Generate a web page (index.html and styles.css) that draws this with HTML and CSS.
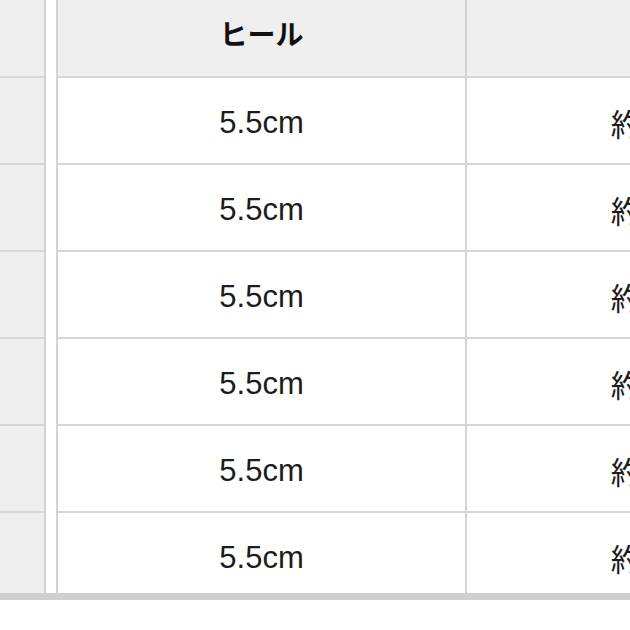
FILE: index.html
```html
<!DOCTYPE html>
<html lang="ja">
<head>
<meta charset="utf-8">
<title>サイズ表</title>
<link rel="stylesheet" href="styles.css">
</head>
<body>
<div class="sheet">
  <div class="frame">
    <div class="pane pane-fixed">
      <div class="fcell head"></div>
      <div class="fcell"></div>
      <div class="fcell"></div>
      <div class="fcell"></div>
      <div class="fcell"></div>
      <div class="fcell"></div>
      <div class="fcell"></div>
    </div>
    <div class="pane pane-scroll">
      <div class="row head">
        <div class="cell">ヒール</div>
        <div class="cell"></div>
      </div>
      <div class="row"><div class="cell">5.5cm</div><div class="cell">約1.5cm</div></div>
      <div class="row"><div class="cell">5.5cm</div><div class="cell">約1.5cm</div></div>
      <div class="row"><div class="cell">5.5cm</div><div class="cell">約1.5cm</div></div>
      <div class="row"><div class="cell">5.5cm</div><div class="cell">約1.5cm</div></div>
      <div class="row"><div class="cell">5.5cm</div><div class="cell">約1.5cm</div></div>
      <div class="row"><div class="cell">5.5cm</div><div class="cell">約1.5cm</div></div>
    </div>
  </div>
  <div class="bar"></div>
</div>
</body>
</html>
```

FILE: styles.css
```css
html, body {
  margin: 0;
  padding: 0;
  background: #ffffff;
}

.sheet {
  width: 630px;
  height: 630px;
  overflow: hidden;
  font-family: "Liberation Sans", "Noto Sans CJK JP", sans-serif;
  color: #1c1c1c;
}

.frame {
  display: flex;
  gap: 10px;
  height: 593px;
  overflow: hidden;
}

.pane {
  flex: none;
  display: flex;
  flex-direction: column;
}

.pane-fixed {
  width: 44px;
  background: #efefef;
  border-right: 2px solid #d3d3d3;
}

.fcell {
  flex: none;
  height: 85px;
  border-bottom: 2px solid #d6d6d6;
}

.fcell.head {
  height: 76px;
}

.pane-scroll {
  width: 820px;
  border-left: 2px solid #d3d3d3;
}

.row {
  flex: none;
  display: grid;
  grid-template-columns: 409px 409px;
  height: 85px;
  border-bottom: 2px solid #d6d6d6;
  background: #ffffff;
}

.row.head {
  height: 76px;
  background: #efefef;
}

.cell {
  display: flex;
  align-items: center;
  justify-content: center;
  font-size: 31px;
  border-right: 2px solid #d3d3d3;
  padding-top: 4px;
}

.cell + .cell {
  padding-right: 4px;
}

.row.head .cell {
  font-family: "Noto Sans CJK JP", sans-serif;
  font-weight: 700;
  font-size: 28px;
  color: #111111;
  padding-top: 0;
  padding-bottom: 10px;
}

.bar {
  height: 7px;
  background: #cfcfcf;
}
```
